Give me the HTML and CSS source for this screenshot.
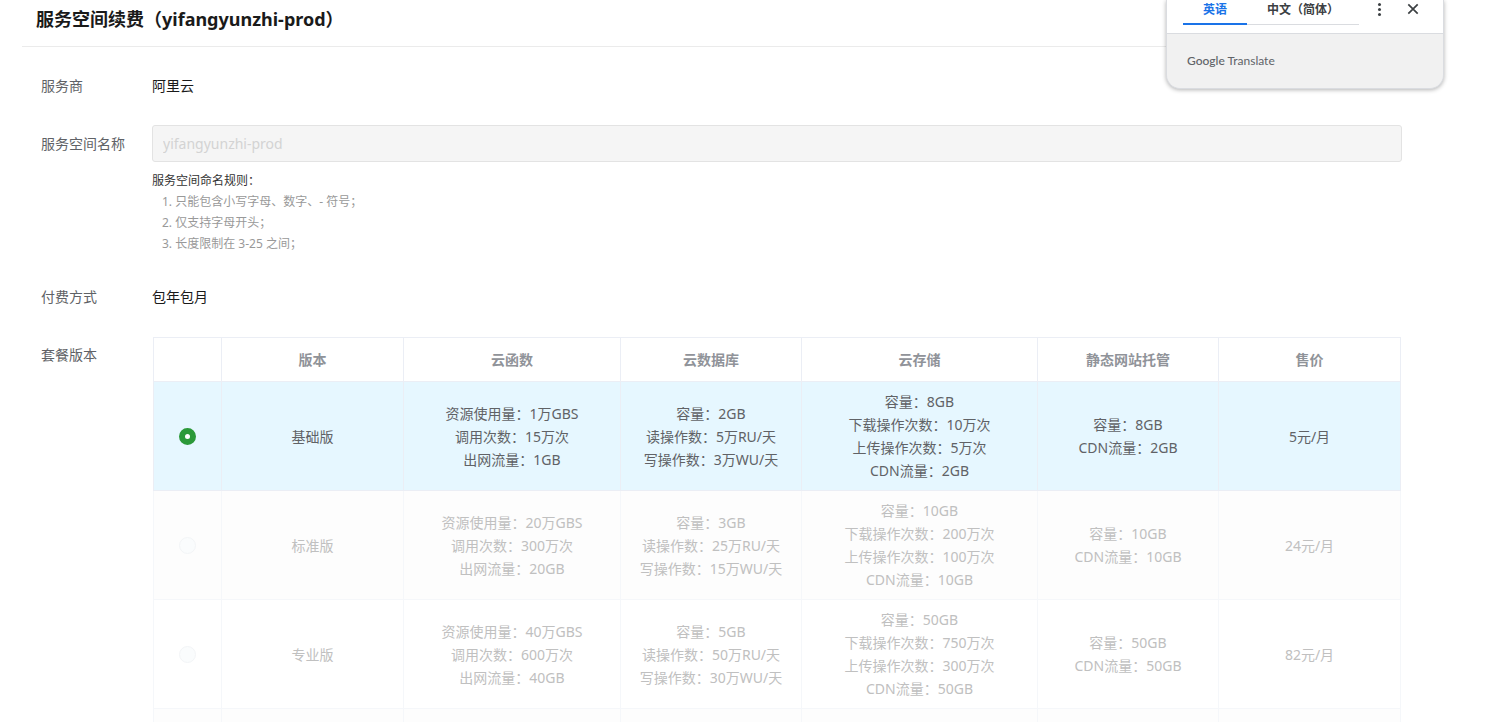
FILE: index.html
```
<!DOCTYPE html>
<html lang="zh-CN">
<head>
<meta charset="utf-8">
<title>服务空间续费</title>
<link rel="stylesheet" href="styles.css">
</head>
<body>
<main class="page">
  <h1 class="page-title">服务空间续费（yifangyunzhi-prod）</h1>
  <form class="form">
    <div class="field">
      <span class="field-label">服务商</span>
      <div class="field-value">阿里云</div>
    </div>
    <div class="field field-name">
      <label class="field-label" for="space-name">服务空间名称</label>
      <div class="field-body">
        <input class="text-input" id="space-name" type="text" value="yifangyunzhi-prod" disabled>
        <p class="rules-title">服务空间命名规则：</p>
        <ol class="rules">
          <li>1. 只能包含小写字母、数字、- 符号；</li>
          <li>2. 仅支持字母开头；</li>
          <li>3. 长度限制在 3-25 之间；</li>
        </ol>
      </div>
    </div>
    <div class="field">
      <span class="field-label">付费方式</span>
      <div class="field-value">包年包月</div>
    </div>
    <div class="field field-plans">
      <span class="field-label">套餐版本</span>
      <div class="plans-wrap">
      <table class="plans">
        <colgroup>
          <col class="col-radio"><col class="col-name"><col class="col-function"><col class="col-database"><col class="col-storage"><col class="col-hosting"><col class="col-price">
        </colgroup>
        <thead>
          <tr><th></th><th>版本</th><th>云函数</th><th>云数据库</th><th>云存储</th><th>静态网站托管</th><th>售价</th></tr>
        </thead>
        <tbody>
          <tr class="plan-selected">
            <td><input class="radio" type="radio" name="plan" id="plan-basic" checked></td>
            <td><label for="plan-basic">基础版</label></td>
            <td>资源使用量：1万GBS<br>调用次数：15万次<br>出网流量：1GB</td>
            <td>容量：2GB<br>读操作数：5万RU/天<br>写操作数：3万WU/天</td>
            <td>容量：8GB<br>下载操作次数：10万次<br>上传操作次数：5万次<br>CDN流量：2GB</td>
            <td>容量：8GB<br>CDN流量：2GB</td>
            <td>5元/月</td>
          </tr>
          <tr class="plan-disabled plan-striped">
            <td><input class="radio" type="radio" name="plan" id="plan-standard" disabled></td>
            <td><label for="plan-standard">标准版</label></td>
            <td>资源使用量：20万GBS<br>调用次数：300万次<br>出网流量：20GB</td>
            <td>容量：3GB<br>读操作数：25万RU/天<br>写操作数：15万WU/天</td>
            <td>容量：10GB<br>下载操作次数：200万次<br>上传操作次数：100万次<br>CDN流量：10GB</td>
            <td>容量：10GB<br>CDN流量：10GB</td>
            <td>24元/月</td>
          </tr>
          <tr class="plan-disabled">
            <td><input class="radio" type="radio" name="plan" id="plan-pro" disabled></td>
            <td><label for="plan-pro">专业版</label></td>
            <td>资源使用量：40万GBS<br>调用次数：600万次<br>出网流量：40GB</td>
            <td>容量：5GB<br>读操作数：50万RU/天<br>写操作数：30万WU/天</td>
            <td>容量：50GB<br>下载操作次数：750万次<br>上传操作次数：300万次<br>CDN流量：50GB</td>
            <td>容量：50GB<br>CDN流量：50GB</td>
            <td>82元/月</td>
          </tr>
          <tr class="plan-disabled plan-striped">
            <td></td><td></td><td></td><td></td><td></td><td></td><td></td>
          </tr>
        </tbody>
      </table>
      </div>
    </div>
  </form>
  <aside class="translate">
    <div class="translate-bar">
      <div class="translate-tabs">
        <button class="translate-tab translate-tab-active" type="button">英语</button>
        <button class="translate-tab" type="button">中文（简体）</button>
      </div>
      <button class="icon-button" type="button" aria-label="更多">
        <svg width="16" height="16" viewBox="0 0 16 16" fill="#3c4043"><circle cx="8.5" cy="3.5" r="1.5"/><circle cx="8.5" cy="8.5" r="1.5"/><circle cx="8.5" cy="13.5" r="1.5"/></svg>
      </button>
      <button class="icon-button icon-close" type="button" aria-label="关闭">
        <svg width="16" height="16" viewBox="0 0 16 16" fill="none" stroke="#3c4043" stroke-width="1.7"><path d="M3.3 3.3l9.4 9.4M12.7 3.3l-9.4 9.4"/></svg>
      </button>
    </div>
    <div class="translate-brand"><span class="brand-name">Google</span> Translate</div>
  </aside>
</main>
</body>
</html>
```
FILE: styles.css
```
* { box-sizing: border-box; }
body {
  margin: 0;
  background: #fff;
  color: #1a1a1a;
  font: 14px/23px "Noto Sans", "Noto Sans CJK SC", sans-serif;
}
.page {
  position: relative;
  height: 100vh;
  overflow: hidden;
  padding: 0 78px 0 22px;
}
.page-title {
  margin: 0;
  padding: 5px 14px 13px;
  border-bottom: 1px solid #ebebeb;
  font-size: 18px;
  line-height: 28px;
  font-weight: 700;
}
.form { padding: 27px 20px 0 19px; }
.field {
  display: grid;
  grid-template-columns: 111px minmax(0, 1fr);
  margin-bottom: 35px;
}
.field-label { color: #606266; }
.field-value { color: #1a1a1a; }
.field-name { margin-top: -7px; margin-bottom: 31px; }
.field-name > .field-label { line-height: 37px; }
.text-input {
  display: block;
  width: 100%;
  height: 37px;
  padding: 0 10px;
  border: 1px solid #e3e3e3;
  border-radius: 3px;
  background: #f5f5f5;
  color: #d3d3d3;
  font: inherit;
}
.rules-title { margin: 8px 0 0; font-size: 12px; line-height: 21px; color: #333; }
.rules {
  margin: 0;
  padding: 0 0 0 10px;
  list-style: none;
  font-size: 12px;
  line-height: 21px;
  color: #999;
}
.field-plans { margin-bottom: 0; }
.plans-wrap { padding: 0 1px; margin-top: -6px; }
.plans {
  width: 100%;
  border-collapse: collapse;
  table-layout: fixed;
  border: 1px solid #ebeef5;
  text-align: center;
  color: #606266;
}
.col-radio { width: 68px; }
.col-name, .col-price { width: 182px; }
.col-database, .col-hosting { width: 181px; }
.col-function { width: 217px; }
.col-storage { width: 236px; }
.plans th, .plans td { padding: 0; border: 1px solid #ebeef5; vertical-align: middle; }
.plans th { height: 44px; color: #909399; font-weight: 600; }
.plans td { height: 109px; }
.plan-selected { background: #e6f7ff; }
.plans .plan-disabled td { border-color: #f5f7fa; color: #c0c0c0; }
.plan-striped { background: #fdfdfd; }
.radio {
  appearance: none;
  display: block;
  width: 17px;
  height: 17px;
  margin: 0 auto;
  border: 1px solid #f3f5f7;
  border-radius: 50%;
  background: #fafcfd;
}
.radio:checked { border: 6px solid #2b9939; background: #fff; }
.translate {
  position: absolute;
  top: 0;
  right: 56px;
  width: 278px;
  border: 1px solid #dadce0;
  border-top: 0;
  border-radius: 0 0 14px 14px;
  background: #f1f1f1;
  box-shadow: 0 1px 4px rgba(0, 0, 0, 0.3);
  overflow: hidden;
}
.translate-bar {
  display: flex;
  align-items: flex-start;
  height: 34px;
  padding-left: 16px;
  border-bottom: 1px solid #dadce0;
  background: #fff;
}
.translate-tabs { display: flex; width: 176px; border-bottom: 1px solid #dadce0; }
.translate-tab {
  height: 24px;
  margin: 0 0 -1px;
  padding: 0 0 3px 20px;
  border: 0;
  border-bottom: 2px solid transparent;
  background: none;
  color: #3c4043;
  font: 600 12px/18px "Noto Sans", "Noto Sans CJK SC", sans-serif;
  white-space: nowrap;
}
.translate-tab-active {
  height: 25px;
  padding: 0 20px 3px;
  border-bottom-color: #1a73e8;
  color: #1a73e8;
}
.icon-button {
  width: 16px;
  height: 16px;
  margin: 1px 0 0 12px;
  padding: 0;
  border: 0;
  background: none;
}
.icon-close { margin-left: 18px; }
.icon-button svg { display: block; }
.translate-brand {
  padding: 17px 20px;
  color: #5f6368;
  font: 12px/20px Lato, sans-serif;
}
.brand-name { font-weight: 500; }
```
